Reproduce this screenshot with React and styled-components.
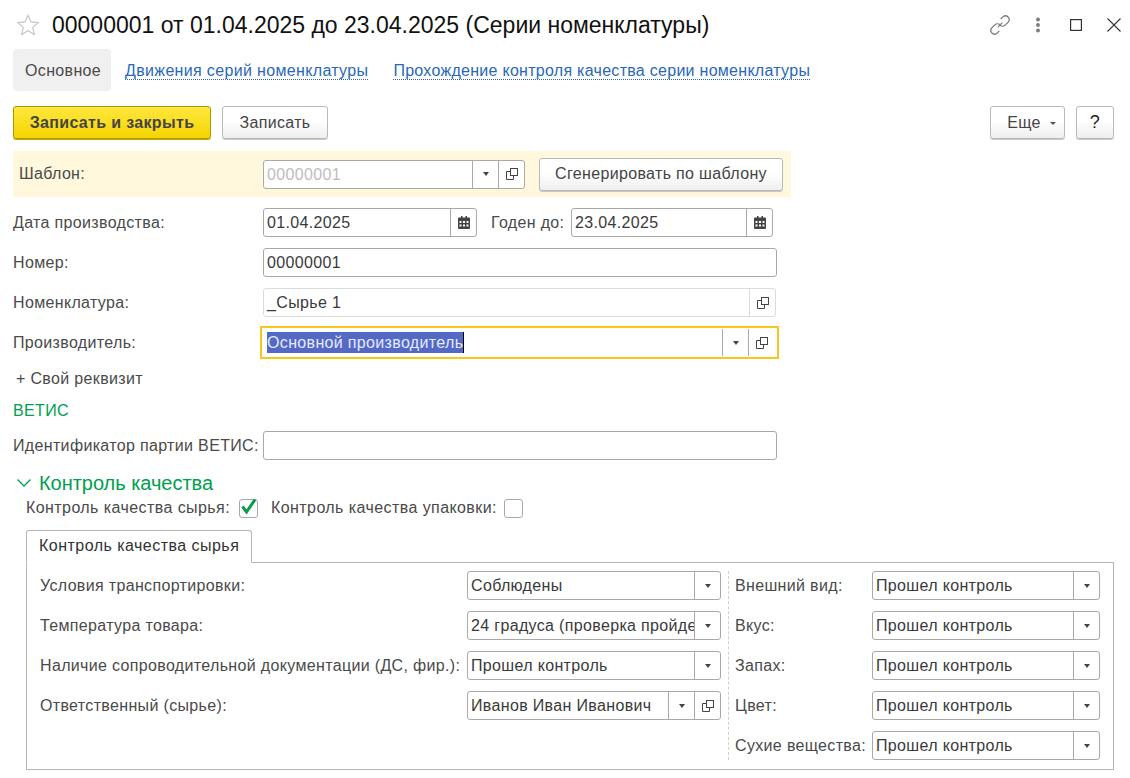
import React from "react";
import styled, { createGlobalStyle } from "styled-components";

const GlobalStyle = createGlobalStyle`
  html, body {
    margin: 0;
    padding: 0;
    background: #fff;
  }
  body {
    font-family: "Liberation Sans", Arial, sans-serif;
    font-size: 16px;
    letter-spacing: 0.34px;
    color: #4a4a4a;
  }
`;

const StarIcon = () => (
  <svg width="24" height="24" viewBox="0 0 24 24" fill="none" stroke="#c4c4c4" strokeWidth="1.1">
    <path d="M12 2.2l2.9 6.7 7.3.7-5.5 4.8 1.7 7.1-6.4-3.8-6.4 3.8 1.7-7.1-5.5-4.8 7.3-.7z" />
  </svg>
);

const LinkIcon = () => (
  <svg width="20" height="20" viewBox="2 2 16 16" fill="none" stroke="#7a7a7a" strokeWidth="1">
    <path d="M8.3 11.7l3.6-3.6" />
    <path d="M10.6 5.2l1.9-1.9a3 3 0 0 1 4.2 4.2l-2.6 2.6a3 3 0 0 1-4.2 0" />
    <path d="M9.4 14.8l-1.9 1.9a3 3 0 0 1-4.2-4.2l2.6-2.6a3 3 0 0 1 4.2 0" />
  </svg>
);

const DotsIcon = () => (
  <svg width="20" height="20" viewBox="0 0 20 20" fill="#7a7a7a">
    <circle cx="10" cy="4.5" r="1.9" />
    <circle cx="10" cy="10" r="1.9" />
    <circle cx="10" cy="15.5" r="1.9" />
  </svg>
);

const MaximizeIcon = () => (
  <svg width="20" height="20" viewBox="0 0 20 20" fill="none" stroke="#333" strokeWidth="1.2">
    <rect x="4.6" y="4.6" width="10.8" height="10.8" />
  </svg>
);

const CloseIcon = () => (
  <svg width="20" height="20" viewBox="0 0 20 20" fill="none" stroke="#333" strokeWidth="1.1">
    <path d="M3.5 3.5l13 13M16.5 3.5l-13 13" />
  </svg>
);

const OpenIcon = () => (
  <svg width="12" height="12" viewBox="0 0 12 12" fill="none" stroke="#444" strokeWidth="1">
    <rect x="4.5" y="0.5" width="7" height="7" />
    <path d="M4.5 3.5h-4v8h7v-4" />
  </svg>
);

const CalendarIcon = () => (
  <svg width="12" height="13" viewBox="0 0 12 13">
    <path d="M1 1.5h2V0h1.5v1.5h3V0H9v1.500h2a1 1 0 0 1 1 1V12a1 1 0 0 1-1 1H1a1 1 0 0 1-1-1V2.500a1 1 0 0 1 1-1z" fill="#444" />
    <path
      d="M1.500 5h2v2h-2zM5 5h2v2H5zM8.500 5h2v2h-2zM1.500 8.500h2v2h-2zM5 8.500h2v2H5zM8.500 8.500h2v2h-2z"
      fill="#fff"
    />
  </svg>
);

const ChevronIcon = () => (
  <svg width="16" height="10" viewBox="0 0 16 10" fill="none" stroke="#00a04f" strokeWidth="1.300">
    <path d="M1.500 1.500L8 8l6.500-6.500" />
  </svg>
);

const CheckIcon = () => (
  <svg width="18" height="17" viewBox="0 0 18 17" fill="none" stroke="#0a9a4c" strokeWidth="3">
    <path d="M2.500 8.500l4 5.500L15 1.500" />
  </svg>
);

const Page = styled.div`
  width: 1130px;
  height: 778px;
  box-sizing: border-box;
  padding: 0 16px 0 13px;
  overflow: hidden;
`;

const TitleBar = styled.div`
  display: flex;
  align-items: center;
  height: 49px;
`;

const StarSlot = styled.span`
  display: flex;
  margin: 0 12px 0 3px;
`;

const Title = styled.h1`
  margin: 0;
  padding-top: 2px;
  font-size: 23px;
  font-weight: 400;
  letter-spacing: 0;
  color: #111;
  white-space: nowrap;
`;

const WindowActions = styled.div`
  display: flex;
  gap: 18px;
  margin-left: auto;
  margin-right: -10px;
  svg {
    display: block;
  }
`;

const TabBar = styled.nav`
  display: flex;
  align-items: center;
  height: 42px;
  margin-bottom: 15px;
`;

const ActiveTab = styled.span`
  box-sizing: border-box;
  display: flex;
  align-items: center;
  height: 100%;
  padding: 2px 10px 0 12px;
  margin-right: 14px;
  background: #f0f0f0;
  border-radius: 4px;
`;

const TabLink = styled.a`
  margin: 2px 25px 0 0;
  color: #2868b8;
  line-height: 17px;
  border-bottom: 1px dotted #2868b8;
  & + & {
    letter-spacing: 0.28px;
  }
`;

const CommandBar = styled.div`
  display: flex;
  height: 33px;
  margin-bottom: 12px;
`;

const Button = styled.button`
  box-sizing: border-box;
  height: 33px;
  width: ${(p) => p.$width}px;
  margin-left: ${(p) => p.$offset || 0}px;
  padding: 0 0 0 ${(p) => p.$pad || 0}px;
  font: ${(p) => (p.$primary ? "700" : "400")} 16px "Liberation Sans", Arial, sans-serif;
  letter-spacing: inherit;
  color: #444;
  border: 1px solid ${(p) => (p.$primary ? "#ae9600" : "#b9b9b9")};
  border-radius: 3px;
  background: ${(p) =>
    p.$primary
      ? "linear-gradient(#ffe73f, #f5d500)"
      : "linear-gradient(#ffffff 45%, #eeeeee)"};
  box-shadow: 0 1px 0 ${(p) => (p.$primary ? "#c4aa00" : "#c8c8c8")};
`;

const HelpButton = styled(Button)`
  font-size: 18px;
  color: #222;
`;

const MoreCaret = styled.span`
  display: inline-block;
  margin-left: 9px;
  vertical-align: middle;
  border: 3px solid transparent;
  border-top-color: #555;
  border-bottom: 0;
`;

const TemplateBand = styled.div`
  display: flex;
  align-items: center;
  box-sizing: border-box;
  width: 778px;
  height: 46px;
  margin-bottom: 11px;
  padding-left: 6px;
  background: #fff8dc;
`;

const Row = styled.div`
  display: flex;
  align-items: center;
  height: 29px;
  margin-bottom: ${(p) => p.$gap ?? 11}px;
`;

const Label = styled.span`
  box-sizing: border-box;
  flex: none;
  width: ${(p) => p.$width}px;
  padding-left: ${(p) => p.$indent || 0}px;
  white-space: nowrap;
`;

const Field = styled.div`
  box-sizing: border-box;
  flex: none;
  display: flex;
  align-items: stretch;
  width: ${(p) => p.$width}px;
  height: 29px;
  background: #fff;
  border: 1px solid ${(p) => (p.$soft ? "#dcdcdc" : "#a9a9a9")};
  border-radius: 3px;
`;

const FocusedField = styled(Field)`
  height: 33px;
  margin: -2px 0 -2px -3px;
  padding: 1px 3px 1px 2px;
  border: 2px solid #f7c71c;
  border-radius: 0;
`;

const Value = styled.span`
  flex: 1;
  min-width: 0;
  padding-left: 3px;
  overflow: hidden;
  white-space: nowrap;
  line-height: 27px;
  color: ${(p) => (p.$muted ? "#bdbdbd" : "#3a3a3a")};
`;

const Selection = styled.span`
  padding: 2px 0;
  color: #e6e9fa;
  background: #5469c6;
  border-right: 1px solid #000;
`;

const FieldButton = styled.span`
  flex: none;
  display: flex;
  align-items: center;
  justify-content: center;
  width: 25px;
  border-left: 1px solid ${(p) => (p.$soft ? "#dcdcdc" : "#a9a9a9")};
`;

const FieldCaret = styled.span`
  border: 3.500px solid transparent;
  border-top: 4px solid #444;
  border-bottom: 0;
`;

const DropButton = () => (
  <FieldButton>
    <FieldCaret />
  </FieldButton>
);

const OpenButton = ({ soft }) => (
  <FieldButton $soft={soft}>
    <OpenIcon />
  </FieldButton>
);

const DateButton = () => (
  <FieldButton>
    <CalendarIcon />
  </FieldButton>
);

const AddAttribute = styled.div`
  height: 20px;
  margin: 12px 0 12px;
  padding-left: 3px;
  line-height: 20px;
`;

const GroupTitle = styled.div`
  height: 20px;
  margin-bottom: 10px;
  line-height: 20px;
  color: #00a04f;
`;

const CollapseHeader = styled.div`
  display: flex;
  align-items: center;
  gap: 7px;
  height: 22px;
  margin: 12px 0 3px 3px;
  font-size: 20px;
  letter-spacing: -0.03px;
  color: #00a04f;
`;

const CheckRow = styled.div`
  display: flex;
  align-items: center;
  height: 22px;
  margin: 0 0 11px 13px;
  letter-spacing: 0.42px;
`;

const Checkbox = styled.span`
  box-sizing: border-box;
  position: relative;
  width: 19px;
  height: 19px;
  margin: 0 13px 0 9px;
  background: #fff;
  border: 1px solid #a9a9a9;
  border-radius: 3px;
  &:last-child {
    margin-left: 7px;
  }
  svg {
    position: absolute;
    top: -2px;
    left: 0;
  }
`;

const PanelTab = styled.div`
  box-sizing: border-box;
  width: 226px;
  height: 33px;
  margin: 0 0 -1px 13px;
  padding-left: 12px;
  position: relative;
  line-height: 30px;
  letter-spacing: 0.47px;
  color: #333;
  background: #fff;
  border: 1px solid #b4b4b4;
  border-bottom-color: #fff;
  border-radius: 3px 3px 0 0;
`;

const Panel = styled.section`
  box-sizing: border-box;
  display: flex;
  width: 1088px;
  height: 208px;
  margin-left: 13px;
  padding: 8px 13px 9px;
  border: 1px solid #b4b4b4;
`;

const PanelColumn = styled.div`
  flex: none;
  width: ${(p) => p.$width}px;
`;

const ColumnDivider = styled.div`
  flex: none;
  margin: 0 6px 0 7px;
  border-left: 1px dashed #cfcfcf;
`;

const leftRows = [
  { label: "Условия транспортировки:", value: "Соблюдены" },
  { label: "Температура товара:", value: "24 градуса (проверка пройдена)" },
  { label: "Наличие сопроводительной документации (ДС, фир.):", value: "Прошел контроль" },
  { label: "Ответственный (сырье):", value: "Иванов Иван Иванович", open: true },
];

const rightRows = ["Внешний вид:", "Вкус:", "Запах:", "Цвет:", "Сухие вещества:"];

export default function App() {
  return (
    <Page>
      <GlobalStyle />
      <TitleBar>
        <StarSlot>
          <StarIcon />
        </StarSlot>
        <Title>00000001 от 01.04.2025 до 23.04.2025 (Серии номенклатуры)</Title>
        <WindowActions>
          <LinkIcon />
          <DotsIcon />
          <MaximizeIcon />
          <CloseIcon />
        </WindowActions>
      </TitleBar>

      <TabBar>
        <ActiveTab>Основное</ActiveTab>
        <TabLink>Движения серий номенклатуры</TabLink>
        <TabLink>Прохождение контроля качества серии номенклатуры</TabLink>
      </TabBar>

      <CommandBar>
        <Button $primary $width={198}>
          Записать и закрыть
        </Button>
        <Button $width={106} $offset={11}>
          Записать
        </Button>
        <Button $width={75} $offset={662} $pad={8}>
          Еще
          <MoreCaret />
        </Button>
        <HelpButton $width={38} $offset={11}>
          ?
        </HelpButton>
      </CommandBar>

      <TemplateBand>
        <Label $width={244}>Шаблон:</Label>
        <Field $width={262}>
          <Value $muted>00000001</Value>
          <DropButton />
          <OpenButton />
        </Field>
        <Button $width={244} $offset={14}>
          Сгенерировать по шаблону
        </Button>
      </TemplateBand>

      <Row>
        <Label $width={250}>Дата производства:</Label>
        <Field $width={214}>
          <Value>01.04.2025</Value>
          <DateButton />
        </Field>
        <Label $width={94} $indent={14}>
          Годен до:
        </Label>
        <Field $width={202}>
          <Value>23.04.2025</Value>
          <DateButton />
        </Field>
      </Row>
      <Row>
        <Label $width={250}>Номер:</Label>
        <Field $width={514}>
          <Value>00000001</Value>
        </Field>
      </Row>
      <Row>
        <Label $width={250}>Номенклатура:</Label>
        <Field $width={513} $soft>
          <Value>_Сырье 1</Value>
          <OpenButton soft />
        </Field>
      </Row>
      <Row $gap={0}>
        <Label $width={250}>Производитель:</Label>
        <FocusedField $width={519}>
          <Value>
            <Selection>Основной производитель</Selection>
          </Value>
          <DropButton />
          <OpenButton />
        </FocusedField>
      </Row>

      <AddAttribute>+ Свой реквизит</AddAttribute>
      <GroupTitle>ВЕТИС</GroupTitle>
      <Row $gap={0}>
        <Label $width={250}>Идентификатор партии ВЕТИС:</Label>
        <Field $width={514} />
      </Row>

      <CollapseHeader>
        <ChevronIcon />
        Контроль качества
      </CollapseHeader>
      <CheckRow>
        Контроль качества сырья:
        <Checkbox>
          <CheckIcon />
        </Checkbox>
        Контроль качества упаковки:
        <Checkbox />
      </CheckRow>

      <PanelTab>Контроль качества сырья</PanelTab>
      <Panel>
        <PanelColumn $width={681}>
          {leftRows.map((row) => (
            <Row key={row.label}>
              <Label $width={427}>{row.label}</Label>
              <Field $width={254}>
                <Value>{row.value}</Value>
                <DropButton />
                {row.open && <OpenButton />}
              </Field>
            </Row>
          ))}
        </PanelColumn>
        <ColumnDivider />
        <PanelColumn $width={365}>
          {rightRows.map((label) => (
            <Row key={label}>
              <Label $width={137}>{label}</Label>
              <Field $width={228}>
                <Value>Прошел контроль</Value>
                <DropButton />
              </Field>
            </Row>
          ))}
        </PanelColumn>
      </Panel>
    </Page>
  );
}
